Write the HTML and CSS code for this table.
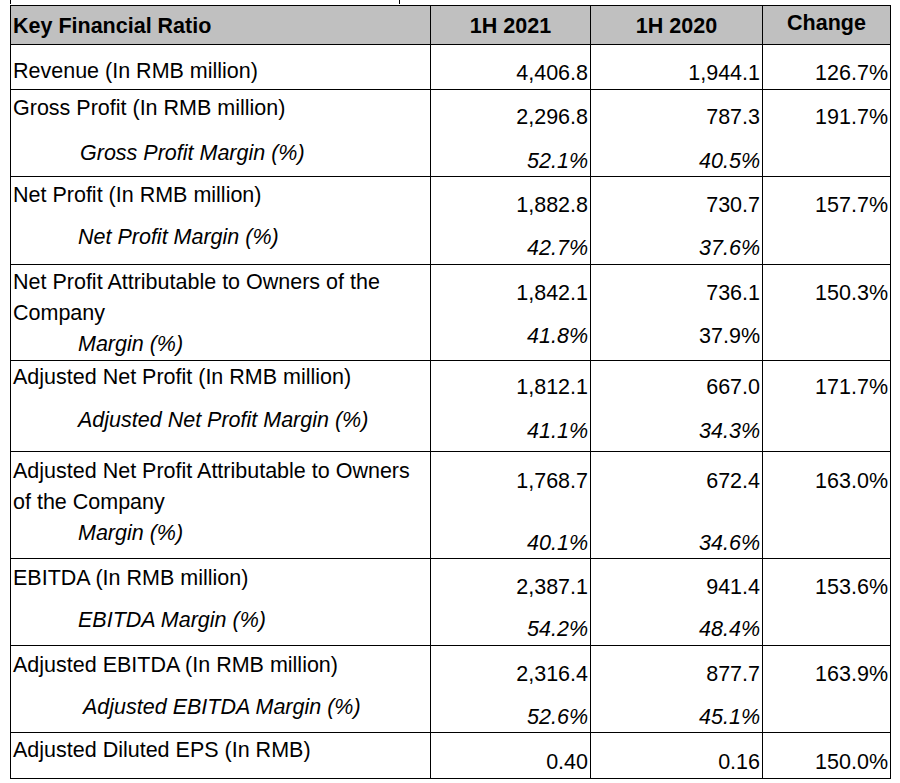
FILE: index.html
```html
<!DOCTYPE html>
<html lang="en">
<head>
<meta charset="utf-8">
<title>Key Financial Ratio</title>
<link rel="stylesheet" href="styles.css">
</head>
<body>
<div class="clip-strip" aria-hidden="true"><span class="mark mark--left"></span><span class="mark mark--mid"></span></div>
<div class="ratio-table" role="table">
  <div class="row row--head" role="row">
    <div class="cell label" role="columnheader"><span class="line">Key Financial Ratio</span></div>
    <div class="cell" role="columnheader"><span class="line">1H 2021</span></div>
    <div class="cell" role="columnheader"><span class="line">1H 2020</span></div>
    <div class="cell cell--change" role="columnheader"><span class="line">Change</span></div>
  </div>

  <div class="row row--revenue" role="row">
    <div class="cell label"><span class="line">Revenue (In RMB million)</span></div>
    <div class="cell num"><span class="line">4,406.8</span></div>
    <div class="cell num"><span class="line">1,944.1</span></div>
    <div class="cell num"><span class="line">126.7%</span></div>
  </div>

  <div class="row row--gross" role="row">
    <div class="cell label"><span class="line">Gross Profit (In RMB million)</span><span class="line sub indent indent--gross">Gross Profit Margin (%)</span></div>
    <div class="cell num"><span class="line">2,296.8</span><span class="line sub it">52.1%</span></div>
    <div class="cell num"><span class="line">787.3</span><span class="line sub it">40.5%</span></div>
    <div class="cell num"><span class="line">191.7%</span></div>
  </div>

  <div class="row row--net" role="row">
    <div class="cell label"><span class="line">Net Profit (In RMB million)</span><span class="line sub indent">Net Profit Margin (%)</span></div>
    <div class="cell num"><span class="line">1,882.8</span><span class="line sub it">42.7%</span></div>
    <div class="cell num"><span class="line">730.7</span><span class="line sub it">37.6%</span></div>
    <div class="cell num"><span class="line">157.7%</span></div>
  </div>

  <div class="row row--owners" role="row">
    <div class="cell label"><span class="line">Net Profit Attributable to Owners of the</span><span class="line">Company</span><span class="line indent">Margin (%)</span></div>
    <div class="cell num"><span class="line">1,842.1</span><span class="line sub it">41.8%</span></div>
    <div class="cell num"><span class="line">736.1</span><span class="line sub">37.9%</span></div>
    <div class="cell num"><span class="line">150.3%</span></div>
  </div>

  <div class="row row--adj-net" role="row">
    <div class="cell label"><span class="line">Adjusted Net Profit (In RMB million)</span><span class="line sub indent">Adjusted Net Profit Margin (%)</span></div>
    <div class="cell num"><span class="line">1,812.1</span><span class="line sub it">41.1%</span></div>
    <div class="cell num"><span class="line">667.0</span><span class="line sub it">34.3%</span></div>
    <div class="cell num"><span class="line">171.7%</span></div>
  </div>

  <div class="row row--adj-owners" role="row">
    <div class="cell label"><span class="line">Adjusted Net Profit Attributable to Owners</span><span class="line">of the Company</span><span class="line indent">Margin (%)</span></div>
    <div class="cell num"><span class="line">1,768.7</span><span class="line sub it">40.1%</span></div>
    <div class="cell num"><span class="line">672.4</span><span class="line sub it">34.6%</span></div>
    <div class="cell num"><span class="line">163.0%</span></div>
  </div>

  <div class="row row--ebitda" role="row">
    <div class="cell label"><span class="line">EBITDA (In RMB million)</span><span class="line sub indent">EBITDA Margin (%)</span></div>
    <div class="cell num"><span class="line">2,387.1</span><span class="line sub it">54.2%</span></div>
    <div class="cell num"><span class="line">941.4</span><span class="line sub it">48.4%</span></div>
    <div class="cell num"><span class="line">153.6%</span></div>
  </div>

  <div class="row row--adj-ebitda" role="row">
    <div class="cell label"><span class="line">Adjusted EBITDA (In RMB million)</span><span class="line sub indent indent--adj-ebitda">Adjusted EBITDA Margin (%)</span></div>
    <div class="cell num"><span class="line">2,316.4</span><span class="line sub it">52.6%</span></div>
    <div class="cell num"><span class="line">877.7</span><span class="line sub it">45.1%</span></div>
    <div class="cell num"><span class="line">163.9%</span></div>
  </div>

  <div class="row row--eps" role="row">
    <div class="cell label"><span class="line">Adjusted Diluted EPS (In RMB)</span></div>
    <div class="cell num"><span class="line">0.40</span></div>
    <div class="cell num"><span class="line">0.16</span></div>
    <div class="cell num"><span class="line">150.0%</span></div>
  </div>
</div>
</body>
</html>
```

FILE: styles.css
```css
* {
  box-sizing: border-box;
}

html, body {
  margin: 0;
  padding: 0;
  background: #ffffff;
}

body {
  font-family: "Liberation Sans", Arial, sans-serif;
  font-size: 21.5px;
  color: #000000;
}

/* remnants of the table above, clipped at the top edge */
.clip-strip {
  display: flex;
  height: 5px;
}

.mark {
  display: block;
  width: 1px;
  height: 4px;
  background: #000000;
}

.mark--left {
  margin-left: 10px;
}

.mark--mid {
  margin-left: 388px;
}

.ratio-table {
  margin-left: 10px;
  width: 881px;
  border: 1px solid #000000;
}

/* each row sets: height, label padding/gap (--lp/--lm), number padding/gap (--np/--nm) */
.row {
  display: grid;
  grid-template-columns: 420px 160px 172px 127px;
  border-bottom: 1px solid #000000;
  --lp: 1px;
  --lm: 13px;
  --np: 10px;
  --nm: 12px;
}

.row:last-child {
  border-bottom: 0;
}

.cell {
  border-right: 1px solid #000000;
}

.cell:last-child {
  border-right: 0;
}

.line {
  display: block;
  line-height: 31px;
  white-space: nowrap;
}

.label {
  padding-left: 2px;
  padding-top: var(--lp);
}

.label .sub {
  margin-top: var(--lm);
}

.num {
  text-align: right;
  padding-right: 2px;
  padding-top: var(--np);
}

.num .sub {
  margin-top: var(--nm);
}

.it {
  font-style: italic;
}

.indent {
  padding-left: 65px;
  font-style: italic;
}

.indent--gross {
  padding-left: 67px;
}

.indent--adj-ebitda {
  padding-left: 70px;
}

/* header */
.row--head {
  height: 39px;
  background: #c0c0c0;
  font-weight: bold;
}

.row--head .cell {
  text-align: center;
  padding-top: 5px;
}

.row--head .label {
  text-align: left;
}

.row--head .cell--change {
  padding-top: 2px;
}

/* single-line rows */
.row--revenue {
  height: 45px;
  --lp: 11px;
  --np: 13px;
}

.row--eps {
  height: 45px;
  --lp: 2px;
  --np: 14px;
}

/* two-line rows */
.row--gross {
  height: 87px;
  --lp: 3px;
  --lm: 14px;
  --np: 12px;
  --nm: 13px;
}

.row--net {
  height: 88px;
  --lp: 3px;
  --lm: 11px;
  --np: 13px;
  --nm: 12px;
}

.row--adj-net {
  height: 91px;
  --lp: 1px;
  --lm: 12px;
  --np: 11px;
  --nm: 13px;
}

.row--ebitda {
  height: 87px;
  --lp: 4px;
  --lm: 11px;
  --np: 13px;
  --nm: 11px;
}

.row--adj-ebitda {
  height: 87px;
  --lp: 4px;
  --lm: 11px;
  --np: 13px;
  --nm: 12px;
}

/* three-line rows: label lines run on without a gap */
.row--owners,
.row--adj-owners {
  --lm: 0px;
}

.row--owners {
  height: 96px;
  --lp: 2px;
  --np: 13px;
  --nm: 12px;
}

.row--adj-owners {
  height: 107px;
  --lp: 4px;
  --np: 14px;
  --nm: 31px;
}
```
